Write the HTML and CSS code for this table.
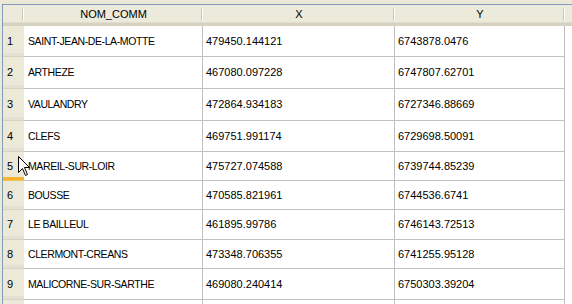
FILE: index.html
```html
<!DOCTYPE html>
<html>
<head>
<meta charset="utf-8">
<link rel="stylesheet" href="styles.css">
</head>
<body>
<div class="frame">
  <div class="grid">
    <div class="hcell corner"></div>
    <div class="hcell">NOM_COMM</div>
    <div class="hcell">X</div>
    <div class="hcell">Y</div>
    <div class="hcell filler"></div>

    <div class="rh">1</div><div class="cell name">SAINT-JEAN-DE-LA-MOTTE</div><div class="cell">479450.144121</div><div class="cell">6743878.0476</div><div class="fill"></div>
    <div class="rh">2</div><div class="cell name">ARTHEZE</div><div class="cell">467080.097228</div><div class="cell">6747807.62701</div><div class="fill"></div>
    <div class="rh">3</div><div class="cell name">VAULANDRY</div><div class="cell">472864.934183</div><div class="cell">6727346.88669</div><div class="fill"></div>
    <div class="rh">4</div><div class="cell name">CLEFS</div><div class="cell">469751.991174</div><div class="cell">6729698.50091</div><div class="fill"></div>
    <div class="rh hover">5</div><div class="cell name">MAREIL-SUR-LOIR</div><div class="cell">475727.074588</div><div class="cell">6739744.85239</div><div class="fill"></div>
    <div class="rh">6</div><div class="cell name">BOUSSE</div><div class="cell">470585.821961</div><div class="cell">6744536.6741</div><div class="fill"></div>
    <div class="rh">7</div><div class="cell name">LE BAILLEUL</div><div class="cell">461895.99786</div><div class="cell">6746143.72513</div><div class="fill"></div>
    <div class="rh">8</div><div class="cell name">CLERMONT-CREANS</div><div class="cell">473348.706355</div><div class="cell">6741255.95128</div><div class="fill"></div>
    <div class="rh">9</div><div class="cell name">MALICORNE-SUR-SARTHE</div><div class="cell">469080.240414</div><div class="cell">6750303.39204</div><div class="fill"></div>
    <div class="rh"></div><div class="cell"></div><div class="cell"></div><div class="cell"></div><div class="fill"></div>
  </div>
  <svg class="cursor" width="13" height="21" viewBox="0 0 13 21">
    <path d="M0.5 0.5 L0.5 16.5 L4.5 12.5 L7.5 19.5 L9.5 18.5 L6.5 11.5 L11.5 11.5 Z" fill="#fff" stroke="#000" stroke-width="1" stroke-linejoin="miter"/>
  </svg>
</div>
</body>
</html>
```
FILE: styles.css
```css
html, body {
  margin: 0;
  padding: 0;
  background: #ECE9D8;
  overflow: hidden;
}
body {
  width: 572px;
  height: 304px;
  font-family: "Liberation Sans", Arial, sans-serif;
  font-size: 11px;
  color: #000;
}
.frame {
  position: relative;
  padding: 4px 0 0 2px;
  height: 300px;
  overflow: hidden;
}
.grid {
  display: grid;
  grid-template-columns: 21px 179px 192px 170px 1fr;
  grid-template-rows: 21px 31px 32px 32px 31px 29px 29px 30px 29px 31px 31px;
  border-top: 1px solid #7F9DB9;
  border-left: 1px solid #7F9DB9;
  background: #fff;
}
.hcell {
  position: relative;
  background: #EBEADB;
  border-bottom: 3px solid #D6D2C2;
  box-shadow: inset 0 -1px 0 #E2DECD;
  display: flex;
  align-items: center;
  justify-content: center;
  padding-bottom: 1px;
  box-sizing: border-box;
}
.hcell::after {
  content: "";
  position: absolute;
  right: 0;
  top: 3px;
  bottom: 2px;
  width: 2px;
  background: linear-gradient(to right, #CBC7B8 50%, #fff 50%);
}
.hcell.filler::after { display: none; }
.rh {
  position: relative;
  background: #ECE9D8;
  padding-left: 4px;
  padding-bottom: 1px;
  display: flex;
  align-items: center;
  box-shadow: inset 0 -3px 0 #E4E1D3, inset 0 -2px 0 #F4F3EC;
  border-bottom: 1px solid #D8D4C4;
}
.rh.hover {
  box-shadow: inset 0 -3px 0 #F8B32F, inset 0 -2px 0 #E59A26;
  border-bottom-color: #F0C060;
}
.cell {
  background: #fff;
  border-right: 1px solid #C0C0C0;
  border-bottom: 1px solid #C0C0C0;
  padding-left: 3px;
  padding-bottom: 1px;
  display: flex;
  align-items: center;
  white-space: nowrap;
  overflow: hidden;
}
.cell.name {
  font-size: 10.5px;
  letter-spacing: -0.4px;
  padding-left: 4px;
}
.fill {
  background: #fff;
}
.cursor {
  position: absolute;
  left: 18px;
  top: 156px;
}
```
